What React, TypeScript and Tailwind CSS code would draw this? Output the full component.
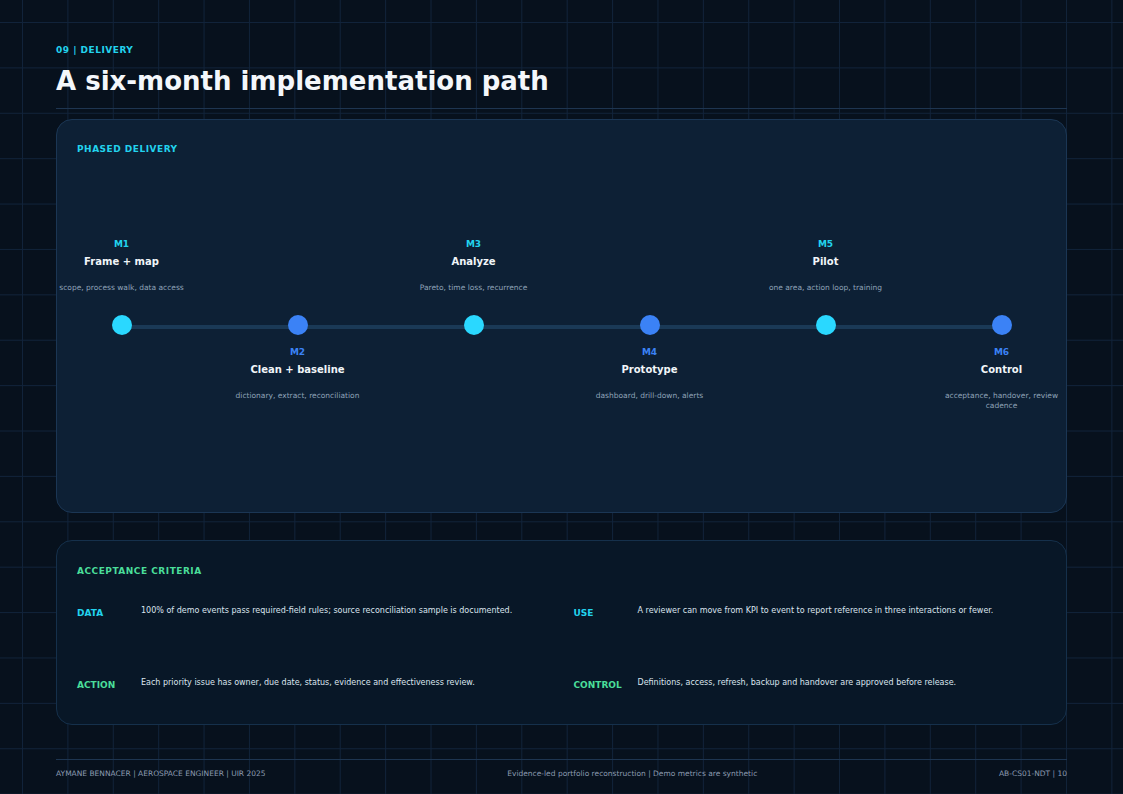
const phases = [
  { m: "M1", title: "Frame + map", desc: "scope, process walk, data access", up: true },
  { m: "M2", title: "Clean + baseline", desc: "dictionary, extract, reconciliation", up: false },
  { m: "M3", title: "Analyze", desc: "Pareto, time loss, recurrence", up: true },
  { m: "M4", title: "Prototype", desc: "dashboard, drill-down, alerts", up: false },
  { m: "M5", title: "Pilot", desc: "one area, action loop, training", up: true },
  { m: "M6", title: "Control", desc: "acceptance, handover, review cadence", up: false },
];

const criteria = [
  { label: "DATA", color: "text-[#22d3ee]", text: "100% of demo events pass required-field rules; source reconciliation sample is documented." },
  { label: "USE", color: "text-[#22d3ee]", text: "A reviewer can move from KPI to event to report reference in three interactions or fewer." },
  { label: "ACTION", color: "text-[#4ade9a]", text: "Each priority issue has owner, due date, status, evidence and effectiveness review." },
  { label: "CONTROL", color: "text-[#4ade9a]", text: "Definitions, access, refresh, backup and handover are approved before release." },
];

function Label({ m, title, desc, cyan }: { m: string; title: string; desc: string; cyan: boolean }) {
  return (
    <div className="flex flex-col items-center text-center">
      <div className={`text-[9px] font-bold leading-[12px] ${cyan ? "text-[#22d3ee]" : "text-[#3b82f6]"}`}>{m}</div>
      <div className="mt-[5px] text-[10px] font-bold leading-[14px] text-[#f1f5f9]">{title}</div>
      <div className="mt-[14px] max-w-[128px] text-[7.5px] leading-[10px] text-[#8fa3b8]">{desc}</div>
    </div>
  );
}

export default function App() {
  return (
    <div
      className="h-[794px] w-[1123px] overflow-hidden bg-[#07111d] px-[56px] pt-[44px] text-white"
      style={{
        fontFamily: '"DejaVu Sans", sans-serif',
        backgroundImage:
          "linear-gradient(#11233a 1px, transparent 1px), linear-gradient(90deg, #11233a 1px, transparent 1px)",
        backgroundSize: "45.4px 45.4px",
        backgroundPosition: "22px 22px",
      }}
    >
      <div className="text-[9px] font-bold tracking-[0.5px] leading-[12px] text-[#22d3ee]">09 | DELIVERY</div>
      <h1 className="mt-[8px] text-[26px] font-bold leading-[34px] text-[#f4f7fb]">A six-month implementation path</h1>
      <div className="mt-[10px] h-px bg-[#1e3550]" />

      <div className="mt-[10px] h-[394px] overflow-hidden rounded-[16px] border border-[#1b3654] bg-[#0d2035] pt-[23px]">
        <div className="px-[20px] text-[9px] font-bold tracking-[0.5px] leading-[12px] text-[#22d3ee]">PHASED DELIVERY</div>
        <div className="relative mt-[83px] flex justify-center">
          <div className="absolute left-[64px] right-[66px] top-[87px] h-[4px] bg-[#1a3956]" />
          {phases.map((p, i) => (
            <div key={p.m} className="relative flex w-[176px] shrink-0 flex-col items-center">
              <div className="flex h-[67px] items-start">
                {p.up && <Label m={p.m} title={p.title} desc={p.desc} cyan={i % 2 === 0} />}
              </div>
              <div className="mt-[10px] h-[20px] w-[20px] rounded-full" />
              <div className={`-mt-[20px] h-[20px] w-[20px] rounded-full ${i % 2 === 0 ? "bg-[#2ad8ff]" : "bg-[#3b82f6]"}`} />
              <div className="mt-[11px]">
                {!p.up && <Label m={p.m} title={p.title} desc={p.desc} cyan={false} />}
              </div>
            </div>
          ))}
        </div>
      </div>

      <div className="mt-[27px] h-[185px] rounded-[16px] border border-[#15304b] bg-[#081727] px-[20px] pt-[24px]">
        <div className="text-[9px] font-bold tracking-[0.5px] leading-[12px] text-[#4ade9a]">ACCEPTANCE CRITERIA</div>
        <div className="mt-[28px] grid grid-cols-2 gap-x-[24px] gap-y-[58px]">
          {criteria.map((c) => (
            <div key={c.label} className="flex items-start">
              <div className={`w-[64px] shrink-0 pt-[2px] text-[9px] font-bold leading-[12px] ${c.color}`}>{c.label}</div>
              <div className="text-[8px] leading-[12px] text-[#dbe4ee]">{c.text}</div>
            </div>
          ))}
        </div>
      </div>

      <div className="mt-[34px] h-px bg-[#1e3550]" />
      <div className="mt-[8px] flex justify-between text-[7.5px] leading-[12px] text-[#8b9bb0]">
        <span>AYMANE BENNACER | AEROSPACE ENGINEER | UIR 2025</span>
        <span>Evidence-led portfolio reconstruction | Demo metrics are synthetic</span>
        <span>AB-CS01-NDT | 10</span>
      </div>
    </div>
  );
}
